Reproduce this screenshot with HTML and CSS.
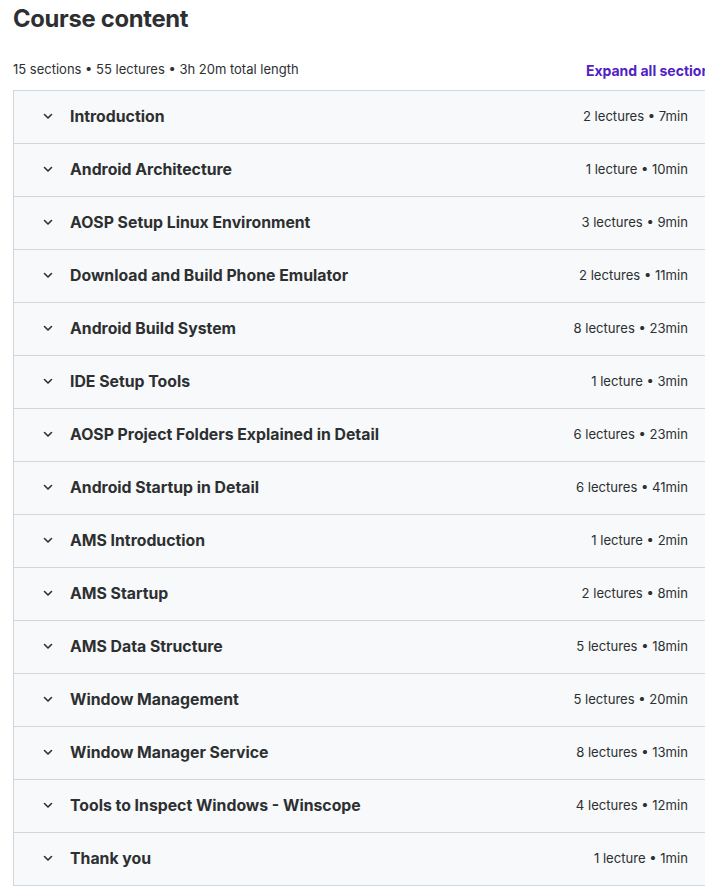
FILE: index.html
```html
<!DOCTYPE html>
<html lang="en">
<head>
    <meta charset="UTF-8">
    <meta name="viewport" content="width=device-width, initial-scale=1.0">
    <title>Course content</title>
    <link rel="stylesheet" href="styles.css">
</head>
<body>
    <div class="curriculum">
        <h2 class="curriculum-title">Course content</h2>
        <div class="curriculum-meta">
            <span>15 sections • 55 lectures • 3h 20m total length</span>
            <button class="expand-all">Expand all sections</button>
        </div>
        <div class="sections">
            <div class="section"><span class="chevron"><svg viewBox="0 0 12 12" width="12" height="12"><path d="M2.5 4.5 L6 8 L9.5 4.5"/></svg></span><span class="section-title">Introduction</span><span class="section-info">2 lectures • 7min</span></div>
            <div class="section"><span class="chevron"><svg viewBox="0 0 12 12" width="12" height="12"><path d="M2.5 4.5 L6 8 L9.5 4.5"/></svg></span><span class="section-title">Android Architecture</span><span class="section-info">1 lecture • 10min</span></div>
            <div class="section"><span class="chevron"><svg viewBox="0 0 12 12" width="12" height="12"><path d="M2.5 4.5 L6 8 L9.5 4.5"/></svg></span><span class="section-title">AOSP Setup Linux Environment</span><span class="section-info">3 lectures • 9min</span></div>
            <div class="section"><span class="chevron"><svg viewBox="0 0 12 12" width="12" height="12"><path d="M2.5 4.5 L6 8 L9.5 4.5"/></svg></span><span class="section-title">Download and Build Phone Emulator</span><span class="section-info">2 lectures • 11min</span></div>
            <div class="section"><span class="chevron"><svg viewBox="0 0 12 12" width="12" height="12"><path d="M2.5 4.5 L6 8 L9.5 4.5"/></svg></span><span class="section-title">Android Build System</span><span class="section-info">8 lectures • 23min</span></div>
            <div class="section"><span class="chevron"><svg viewBox="0 0 12 12" width="12" height="12"><path d="M2.5 4.5 L6 8 L9.5 4.5"/></svg></span><span class="section-title">IDE Setup Tools</span><span class="section-info">1 lecture • 3min</span></div>
            <div class="section"><span class="chevron"><svg viewBox="0 0 12 12" width="12" height="12"><path d="M2.5 4.5 L6 8 L9.5 4.5"/></svg></span><span class="section-title">AOSP Project Folders Explained in Detail</span><span class="section-info">6 lectures • 23min</span></div>
            <div class="section"><span class="chevron"><svg viewBox="0 0 12 12" width="12" height="12"><path d="M2.5 4.5 L6 8 L9.5 4.5"/></svg></span><span class="section-title">Android Startup in Detail</span><span class="section-info">6 lectures • 41min</span></div>
            <div class="section"><span class="chevron"><svg viewBox="0 0 12 12" width="12" height="12"><path d="M2.5 4.5 L6 8 L9.5 4.5"/></svg></span><span class="section-title">AMS Introduction</span><span class="section-info">1 lecture • 2min</span></div>
            <div class="section"><span class="chevron"><svg viewBox="0 0 12 12" width="12" height="12"><path d="M2.5 4.5 L6 8 L9.5 4.5"/></svg></span><span class="section-title">AMS Startup</span><span class="section-info">2 lectures • 8min</span></div>
            <div class="section"><span class="chevron"><svg viewBox="0 0 12 12" width="12" height="12"><path d="M2.5 4.5 L6 8 L9.5 4.5"/></svg></span><span class="section-title">AMS Data Structure</span><span class="section-info">5 lectures • 18min</span></div>
            <div class="section"><span class="chevron"><svg viewBox="0 0 12 12" width="12" height="12"><path d="M2.5 4.5 L6 8 L9.5 4.5"/></svg></span><span class="section-title">Window Management</span><span class="section-info">5 lectures • 20min</span></div>
            <div class="section"><span class="chevron"><svg viewBox="0 0 12 12" width="12" height="12"><path d="M2.5 4.5 L6 8 L9.5 4.5"/></svg></span><span class="section-title">Window Manager Service</span><span class="section-info">8 lectures • 13min</span></div>
            <div class="section"><span class="chevron"><svg viewBox="0 0 12 12" width="12" height="12"><path d="M2.5 4.5 L6 8 L9.5 4.5"/></svg></span><span class="section-title">Tools to Inspect Windows - Winscope</span><span class="section-info">4 lectures • 12min</span></div>
            <div class="section"><span class="chevron"><svg viewBox="0 0 12 12" width="12" height="12"><path d="M2.5 4.5 L6 8 L9.5 4.5"/></svg></span><span class="section-title">Thank you</span><span class="section-info">1 lecture • 1min</span></div>
        </div>
    </div>
</body>
</html>
```

FILE: styles.css
```css
html, body {
    margin: 0;
    padding: 0;
    background: #fff;
    color: #2d2f31;
    font-family: 'Inter', 'Noto Sans', sans-serif;
    overflow: hidden;
}

.curriculum {
    width: 705px;
    padding: 0 0 0 13px;
}

.curriculum-title {
    margin: 0;
    padding-top: 4px;
    font-size: 23.8px;
    line-height: 30px;
    font-weight: 700;
    letter-spacing: -0.3px;
}

.curriculum-meta {
    display: flex;
    justify-content: space-between;
    align-items: center;
    margin-top: 25px;
    margin-bottom: 11px;
    font-size: 13px;
    line-height: 16px;
}

.expand-all {
    background: none;
    border: none;
    padding: 0;
    margin-top: 3px;
    font-family: inherit;
    font-size: 14px;
    font-weight: 700;
    color: #5022c3;
    cursor: pointer;
    white-space: nowrap;
}

.sections {
    border: 1px solid #d1d7dc;
    border-right: none;
}

.section {
    display: flex;
    align-items: center;
    height: 50px;
    padding: 0 30px 2px 28px;
    background: #f7f9fa;
    border-top: 1px solid #d1d7dc;
}

.section:first-child {
    border-top: none;
}

.chevron {
    display: flex;
    width: 12px;
    margin-right: 16px;
}

.chevron svg path {
    fill: none;
    stroke: #2d2f31;
    stroke-width: 1.6;
    stroke-linecap: round;
    stroke-linejoin: round;
}

.section-title {
    flex: 1;
    font-size: 15.8px;
    font-weight: 700;
}

.section-info {
    font-size: 13.1px;
    white-space: nowrap;
}
```
